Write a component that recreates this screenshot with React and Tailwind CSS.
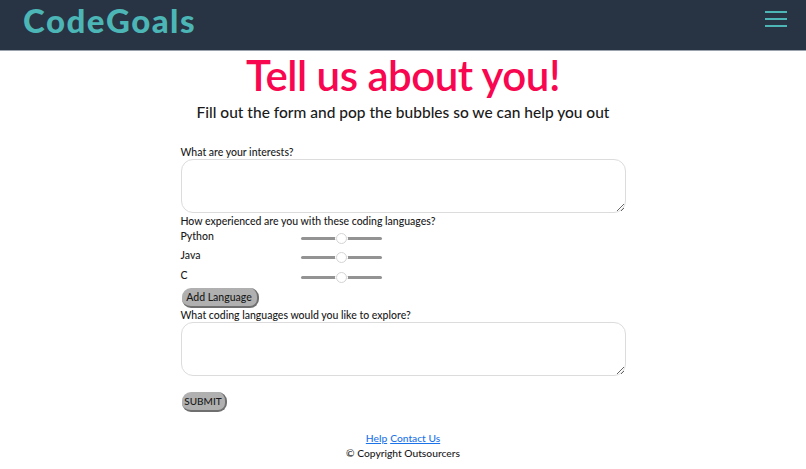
import React from "react";

const font = { fontFamily: '"Lato", "Noto Sans", sans-serif' };

function Slider({ label }) {
  return (
    <div className="flex h-[19.5px] items-center">
      <label className="mb-[4px] w-[120px] text-[10.5px] font-medium leading-[14px] text-[#1a1a1a]">{label}</label>
      <input
        type="range"
        defaultValue={50}
        className="mt-[1px] h-[16px] w-[81px] appearance-none bg-transparent [&::-webkit-slider-runnable-track]:h-[3px] [&::-webkit-slider-runnable-track]:rounded-full [&::-webkit-slider-runnable-track]:bg-[#939393] [&::-webkit-slider-thumb]:mt-[-4px] [&::-webkit-slider-thumb]:h-[11px] [&::-webkit-slider-thumb]:w-[11px] [&::-webkit-slider-thumb]:appearance-none [&::-webkit-slider-thumb]:rounded-full [&::-webkit-slider-thumb]:border [&::-webkit-slider-thumb]:border-[#d4d4d4] [&::-webkit-slider-thumb]:bg-white [&::-webkit-slider-thumb]:shadow-[0_0_0_1px_white]"
      />
    </div>
  );
}

function PillButton({ children, className }) {
  return (
    <button
      type="button"
      className={"block rounded-[9px] border-r-2 border-b-2 border-[#6f6f6f] bg-[#b0b0b0] font-medium leading-[14px] text-[#1a1a1a] " + className}
    >
      {children}
    </button>
  );
}

export default function App() {
  return (
    <div className="min-h-[469px] bg-white" style={font}>
      <header className="flex h-[51px] items-center justify-between border-b border-[#9aa3ad] bg-[#283344] pl-[23px] pr-[19px]">
        <span className="pb-[10px] text-[33px] font-black leading-[40px] tracking-[1.5px] text-[#4cb5b5]">CodeGoals</span>
        <button type="button" className="mb-[12px] flex w-[22px] flex-col gap-[5px]" aria-label="Menu">
          <span className="h-[2px] bg-[#4cb5b5]" />
          <span className="h-[2px] bg-[#4cb5b5]" />
          <span className="h-[2px] bg-[#4cb5b5]" />
        </button>
      </header>

      <main className="mx-auto w-[445px]">
        <h1 className="-mx-[60px] -mt-[1px] text-center text-[42px] font-semibold leading-[50px] tracking-[-0.5px] text-[#f8064f]">Tell us about you!</h1>
        <p className="-mx-[60px] mt-[2px] text-center text-[15.5px] font-medium leading-[20px] text-[#1a1a1a]">Fill out the form and pop the bubbles so we can help you out</p>

        <form className="mt-[23px]">
          <label className="block h-[14px] text-[10.5px] font-medium leading-[14px] text-[#1a1a1a]">What are your interests?</label>
          <textarea className="block h-[54px] w-full rounded-[12px] border border-[#dcdcdc] bg-white" />
          <label className="mt-[1px] block h-[14px] text-[10.5px] font-medium leading-[14px] text-[#1a1a1a]">How experienced are you with these coding languages?</label>
          <div>
            <Slider label="Python" />
            <Slider label="Java" />
            <Slider label="C" />
          </div>
          <PillButton className="ml-[1px] mt-[1px] h-[20px] w-[77px] text-[10.5px]">Add Language</PillButton>
          <label className="block h-[14px] text-[10.5px] font-medium leading-[14px] text-[#1a1a1a]">What coding languages would you like to explore?</label>
          <textarea className="block h-[54px] w-full rounded-[12px] border border-[#dcdcdc] bg-white" />
          <PillButton className="ml-[1px] mt-[16px] h-[20px] w-[45px] text-[10px]">SUBMIT</PillButton>
        </form>
      </main>

      <footer className="mt-[19px] text-center text-[10.25px] font-medium leading-[15px] text-[#1a1a1a]">
        <div className="flex justify-center gap-[3px]">
          <a href="#help" className="text-[#1a73e8] underline">Help</a>
          <a href="#contact" className="text-[#1a73e8] underline">Contact Us</a>
        </div>
        <div>© Copyright Outsourcers</div>
      </footer>
    </div>
  );
}
